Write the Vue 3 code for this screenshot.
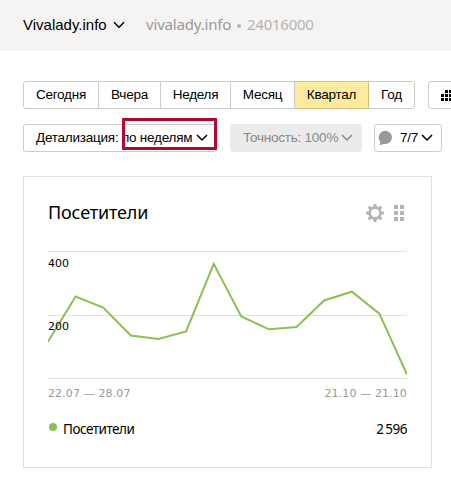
<template>
  <div class="page">
    <header class="header">
      <span class="counter-name">Vivalady.info</span>
      <svg class="header-arrow" width="12" height="8" viewBox="0 0 12 8">
        <path d="M1 1.2L6 6.2L11 1.2" />
      </svg>
      <span class="counter-site">vivalady.info</span>
      <span class="counter-dot"></span>
      <span class="counter-id">24016000</span>
    </header>

    <div class="toolbar">
      <div class="periods">
        <button
          v-for="period in periods"
          :key="period.id"
          :class="['period', period.id, { active: period.id === current }]"
          @click="current = period.id"
        >{{ period.label }}</button>
      </div>
      <button class="calendar">
        <svg width="15" height="11" viewBox="0 0 15 11">
          <rect v-for="cell in cells" :key="cell.id" :x="cell.x" :y="cell.y" width="3" height="3" />
        </svg>
      </button>
    </div>

    <div class="toolbar filters">
      <button class="select detail">
        <span class="detail-text">Детализация: по неделям</span>
        <svg class="arrow" width="12" height="8" viewBox="0 0 12 8"><path d="M1 1L6 6L11 1" /></svg>
        <span class="highlight"></span>
      </button>
      <button class="select accuracy" disabled>
        <span class="accuracy-text">Точность: 100%</span>
        <svg class="arrow" width="12" height="8" viewBox="0 0 12 8"><path d="M1 1L6 6L11 1" /></svg>
      </button>
      <button class="select comments">
        <svg class="bubble" width="14" height="16" viewBox="0 0 14 16">
          <circle cx="7.3" cy="7.3" r="6.6" />
          <path d="M1.2 9.5L2.6 12L1.2 15.2L8 13.6z" />
        </svg>
        <span class="comments-text">7/7</span>
        <svg class="arrow" width="12" height="8" viewBox="0 0 12 8"><path d="M1 1L6 6L11 1" /></svg>
      </button>
    </div>

    <section class="widget">
      <div class="widget-head">
        <h2>Посетители</h2>
        <svg class="gear" width="18" height="18" viewBox="-9 -9 18 18">
          <circle r="5.4" />
          <path v-for="n in 8" :key="n" d="M-1.8 -6L-1.3 -9H1.3L1.8 -6z" :transform="`rotate(${n * 45})`" />
        </svg>
        <svg class="drag" width="10" height="16" viewBox="0 0 10 16">
          <path d="M0 0h4v4H0zM6 0h4v4H6zM0 6h4v4H0zM6 6h4v4H6zM0 12h4v4H0zM6 12h4v4H6z" />
        </svg>
      </div>

      <svg class="chart" width="359" height="128" viewBox="0 0 359 128">
        <path class="grid" d="M0 .5H359M0 64.5H359M0 127.5H359" />
        <polyline class="line" :points="points" />
        <text class="tick" x="0" y="16" textLength="21">400</text>
        <text class="tick" x="0" y="79" textLength="21">200</text>
      </svg>

      <div class="dates">
        <span>22.07 — 28.07</span>
        <span>21.10 — 21.10</span>
      </div>

      <div class="legend">
        <span class="marker"></span>
        <span class="legend-name">Посетители</span>
        <span class="legend-value">2&thinsp;596</span>
      </div>
    </section>
  </div>
</template>

<script setup>
import { ref } from 'vue';

const current = ref('quarter');

const periods = [
  { id: 'today', label: 'Сегодня' },
  { id: 'yesterday', label: 'Вчера' },
  { id: 'week', label: 'Неделя' },
  { id: 'month', label: 'Месяц' },
  { id: 'quarter', label: 'Квартал' },
  { id: 'year', label: 'Год' }
];

// calendar icon: the first row starts one day later
const cells = [];
for (let row = 0; row < 3; row++) {
  for (let col = row === 0 ? 1 : 0; col < 4; col++) {
    cells.push({ id: `${row}-${col}`, x: col * 4, y: row * 4 });
  }
}

const values = [90.7, 45.5, 56.5, 84.5, 88, 80.5, 12.8, 65.5, 78.3, 76, 49.5, 40.7, 62.7, 123.5];
const points = values.map((y, i) => `${(i * 359 / 13).toFixed(1)},${y}`).join(' ');
</script>

<style>
body {
  margin: 0;
  background: #fff;
}
</style>

<style scoped>
.page {
  width: 451px;
  height: 492px;
  overflow: hidden;
  font-family: "Liberation Sans", Arial, sans-serif;
  color: #000;
}

.header {
  display: flex;
  align-items: center;
  height: 51px;
  padding-left: 23px;
  box-sizing: border-box;
  background: #f5f4f2;
  font-size: 15px;
  line-height: 20px;
  white-space: nowrap;
}

.counter-name {
  width: 84px;
  margin-top: -2px;
}

svg {
  display: block;
  flex: none;
}

.header-arrow,
.arrow {
  fill: none;
  stroke: #000;
  stroke-width: 1.5;
}

.header-arrow {
  margin: -1px 0 0 6px;
}

.counter-site {
  width: 85px;
  margin: -3px 0 0 21px;
  font-family: "Noto Sans", sans-serif;
  letter-spacing: -0.18px;
  color: #999;
}

.counter-dot {
  width: 4px;
  height: 4px;
  margin-left: 6px;
  border-radius: 50%;
  background: #b5b5b5;
}

.counter-id {
  margin: -3px 0 0 6px;
  font-family: "Noto Sans", sans-serif;
  letter-spacing: -0.25px;
  color: #b3b3b3;
}

.toolbar {
  display: flex;
  width: 500px;
  margin: 30px 0 0 23px;
}

button {
  box-sizing: border-box;
  height: 28px;
  margin: 0;
  padding: 0;
  border: 1px solid #ccc;
  background: #fff;
  font-family: inherit;
  font-size: 13.5px;
  letter-spacing: -0.23px;
  color: #000;
  white-space: nowrap;
}

.periods {
  display: flex;
}

.period {
  padding-bottom: 1px;
  border-left-width: 0;
}

.today {
  width: 76px;
  border-left-width: 1px;
  border-radius: 3px 0 0 3px;
}

.yesterday {
  width: 62px;
}

.week {
  width: 70px;
}

.month {
  width: 64px;
}

.quarter {
  width: 74px;
}

.year {
  width: 46px;
  border-radius: 0 3px 3px 0;
}

.active {
  border-color: #d1bf80;
  background: #ffeba0;
}

.calendar {
  width: 60px;
  margin-left: 13px;
  padding-left: 12px;
  border-radius: 3px;
}

.filters {
  margin-top: 15px;
}

.select {
  position: relative;
  display: flex;
  align-items: center;
  border-radius: 3px;
}

.select > span:first-child,
.comments-text {
  margin-top: -1px;
}

.detail {
  width: 194px;
  padding-left: 12px;
}

.detail-text {
  width: 156px;
  text-align: left;
}

.detail .arrow {
  margin-left: 4px;
}

.highlight {
  position: absolute;
  left: 98px;
  top: -7px;
  width: 95px;
  height: 32px;
  box-sizing: border-box;
  border: 3px solid #b0082f;
  border-radius: 1px;
}

.accuracy {
  width: 132px;
  margin-left: 13px;
  padding-left: 12px;
  border-color: #ebebeb;
  background: #ebebeb;
  color: #888;
}

.accuracy-text {
  width: 95px;
  text-align: left;
}

.accuracy .arrow {
  margin-left: 3px;
  stroke: #888;
}

.comments {
  width: 68px;
  margin-left: 12px;
  padding-left: 3px;
}

.bubble {
  fill: #999;
}

.comments-text {
  width: 18px;
  margin-left: 8px;
}

.comments .arrow {
  margin-left: 3px;
}

.widget {
  box-sizing: border-box;
  width: 409px;
  height: 292px;
  margin: 24px 0 0 23px;
  padding: 24px;
  border: 1px solid #e0e0e0;
}

.widget-head {
  display: flex;
  align-items: center;
  height: 24px;
}

h2 {
  flex: 1;
  margin: -2px 0 0;
  font-family: "Noto Sans", sans-serif;
  font-size: 18px;
  font-weight: 400;
  line-height: 24px;
  letter-spacing: -0.15px;
}

.gear {
  fill: #b3b3b3;
}

.gear circle {
  fill: none;
  stroke: #b3b3b3;
  stroke-width: 2.6;
}

.drag {
  margin: 0 3px 0 10px;
  fill: #b3b3b3;
}

.chart {
  margin-top: 26px;
}

.grid {
  fill: none;
  stroke: #e0e0e0;
}

.line {
  fill: none;
  stroke: #8cc152;
  stroke-width: 2;
}

.tick {
  font-family: "DejaVu Sans", sans-serif;
  font-size: 11px;
}

.dates {
  display: flex;
  justify-content: space-between;
  width: 359px;
  margin-top: 8px;
  font-family: "DejaVu Sans", sans-serif;
  font-size: 11px;
  line-height: 14px;
  letter-spacing: 0.12px;
  color: #999;
}

.legend {
  display: flex;
  align-items: center;
  width: 359px;
  height: 20px;
  margin-top: 18px;
  font-family: "Noto Sans", sans-serif;
  font-size: 13.5px;
  letter-spacing: -0.5px;
}

.marker {
  width: 8px;
  height: 8px;
  margin: 0 6px 4px 1px;
  border-radius: 50%;
  background: #8cc152;
}

.legend-name {
  flex: 1;
}
</style>
